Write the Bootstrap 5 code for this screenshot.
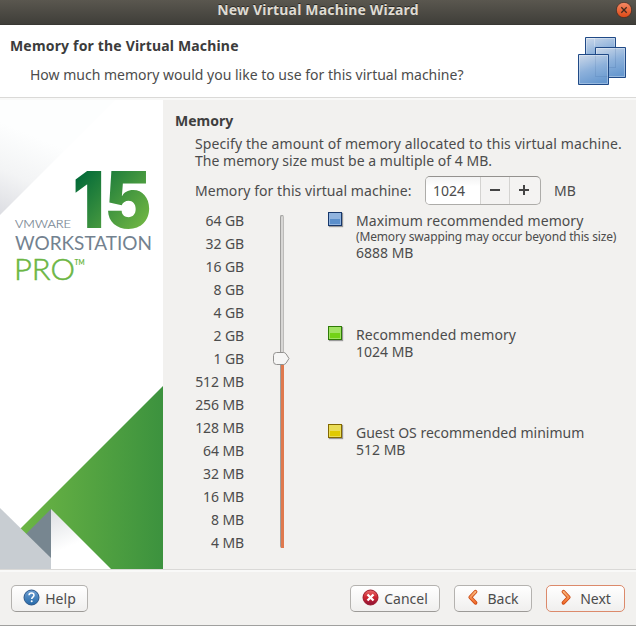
<!DOCTYPE html>
<html lang="en">
<head>
<meta charset="utf-8">
<meta name="viewport" content="width=device-width, initial-scale=1">
<title>New Virtual Machine Wizard</title>
<link href="https://cdn.jsdelivr.net/npm/bootstrap@5.3.0/dist/css/bootstrap.min.css" rel="stylesheet">
<style>
body{width:636px;height:626px;overflow:hidden;background:#f2f1ef;color:#4c4c4c;font:14px/17px "Noto Sans","Open Sans",sans-serif;margin:0}
.wizard{height:626px;border-bottom:1px solid #a0a09e}
.titlebar{height:25px;background:linear-gradient(#5a574f,#3f3e39 96%,#33322e);color:#dfdbd2;padding-bottom:6px;text-shadow:0 -1px #2a2925}
.titlebar .caption{letter-spacing:.17px}
.closer{right:4px;top:2px;width:16px;height:16px}
.intro{height:73px;background:#fff;border-bottom:1px solid #dad9d7;padding:12px 9px 0 10px}
.intro h1{font-size:14px;line-height:18px;letter-spacing:.17px;color:#3c3c3c}
.question{padding:11px 0 0 20px}
.main{height:471px;border-top:2px solid #f8f8f7}
.art{width:163px;height:469px;background:#fff}
.settings{padding:12px 0 0 12px;width:473px}
.settings h2{font-size:14px;line-height:18px;color:#3f3f3f}
.inset{padding-left:20px}
.blurb{padding-top:5px;letter-spacing:.1px;white-space:nowrap}
.blurb .second{letter-spacing:.02px}
.amount{padding-top:7px;height:36px;margin-bottom:4px}
.amount-label{width:230px;letter-spacing:.06px;white-space:nowrap}
.unit{margin-left:13px}
.spin{width:116px;height:29px;border:1px solid #adaca9;border-top-color:#94928f;border-radius:5px;background:#f4f3f2;overflow:hidden}
.spin .value{width:54px;background:linear-gradient(#f3f3f3,#fff 35%);padding-left:7px}
.spin button{width:29px;border:0;border-left:1px solid #d4d3d1;background:transparent;padding:0 0 2px;line-height:0}
.spin button + button{width:31px;padding-right:2px}
.ticks{width:49px;line-height:23px;letter-spacing:-.1px}
.track{width:4px;height:333px;margin:6px 44px 0 36px;border-radius:2px;border:1px solid #a09f9d;border-bottom:0;border-right-color:#bcbbb9;background:#d7d6d4}
.filled{height:190px;bottom:0;left:0;width:3px;background:#df794e}
.thumb{left:-8px;top:136px}
.key{padding-top:3px;width:300px}
.key-item{height:49px}
.key-item + .key-item{margin-top:65px}
.key-item + .key-item + .key-item{margin-top:49px}
.key-item .name{letter-spacing:.07px}
.key-item:last-child .name{letter-spacing:0}
.key-item small{font-size:12px;line-height:15px;letter-spacing:-.15px}
.swatch{width:14px;height:14px;margin-right:14px;border:1px solid var(--edge);background:linear-gradient(var(--hi) 50%,var(--lo) 50%);box-shadow:inset 0 0 0 1px var(--hi),1px 1px 1px #999}
.sw-blue{--edge:#17376b;--hi:#91b4df;--lo:#5b8fcb}
.sw-green{--edge:#2f7b07;--hi:#a0e362;--lo:#73d216}
.sw-gold{--edge:#836800;--hi:#eadd56;--lo:#e0ca00}
.actions{height:56px;border-top:1px solid #dad9d7;padding:15px 11px 0;box-shadow:inset 0 2px #f9f9f8}
.wbtn{height:27px;border:1px solid #b4b2af;border-bottom-color:#9c9a97;border-radius:5px;background:linear-gradient(#fff,#f0efee);color:#4c4c4c;font-size:14px;line-height:17px;padding:0 0 1px;display:flex;align-items:center;justify-content:center}
.wbtn + .wbtn + .wbtn{margin-left:14px}
.w77{width:77px}.w90{width:90px}.w78{width:78px}.w79{width:79px}
.wbtn.primary{border-color:#dc8a6b}
</style>
</head>
<body>
<div class="wizard d-flex flex-column">
  <header class="titlebar position-relative d-flex align-items-center justify-content-center fw-bold">
    <span class="caption">New Virtual Machine Wizard</span>
    <svg class="closer position-absolute" viewBox="0 0 16 16"><defs><linearGradient id="cl" x2="0" y2="1"><stop stop-color="#f58a66"/><stop offset="1" stop-color="#dd4814"/></linearGradient></defs><circle cx="8" cy="8" r="7.7" fill="url(#cl)" stroke="#3b2f28" stroke-width=".8"/><path d="M5.3 5.3l5.4 5.4M10.7 5.3l-5.4 5.4" stroke="#43291d" stroke-width="1.3"/></svg>
  </header>
  <section class="intro d-flex justify-content-between">
    <div>
      <h1 class="fw-bold m-0">Memory for the Virtual Machine</h1>
      <p class="question m-0">How much memory would you like to use for this virtual machine?</p>
    </div>
    <svg width="49" height="49" viewBox="0 0 49 49"><defs><linearGradient id="pane" x1=".2" y1="0" x2=".55" y2="1"><stop stop-color="#c8d6e8"/><stop offset=".5" stop-color="#8db1db"/><stop offset="1" stop-color="#6798cf"/></linearGradient></defs>
      <g stroke="#204a87"><g fill="url(#pane)"><path d="M7.500.500h30v30h-30z"/><path d="M17.500 10.500h30v30h-30z"/></g><path d="M17.500 30.500h20v-20" fill="none" stroke-opacity=".15"/><path d="M.500 17.500h30v30h-30z" fill="url(#pane)"/><path d="M17.500 17.500v22h13" fill="none" stroke-opacity=".12"/></g>
      <g fill="none" stroke="#fff" stroke-opacity=".3"><path d="M16.500 9.500V1.500h-8v15M9 1.500h27.500v8M18.500 17v-5.500h28v28H31"/><path d="M1.500 18.500h28v28h-28z"/></g></svg>
  </section>
  <main class="main d-flex">
    <svg class="art flex-shrink-0" viewBox="0 100 163 469">
      <defs>
        <linearGradient id="green" x1="0" x2="1"><stop offset="0" stop-color="#6cb544"/><stop offset="1" stop-color="#3c923e"/></linearGradient>
        <linearGradient id="num" gradientUnits="userSpaceOnUse" x1="78" y1="172" x2="146" y2="230"><stop stop-color="#006838"/><stop offset="1" stop-color="#75b944"/></linearGradient>
        <linearGradient id="shade" gradientUnits="userSpaceOnUse" x1="0" y1="216" x2="34" y2="136"><stop stop-color="#dcdde2"/><stop offset=".5" stop-color="#f3f4f5"/><stop offset="1" stop-color="#fdfefe"/></linearGradient>
        <linearGradient id="shade2" gradientUnits="userSpaceOnUse" x1="51" y1="512" x2="66" y2="548"><stop stop-color="#dfe1e5"/><stop offset="1" stop-color="#fff"/></linearGradient>
      </defs>
      <path d="M0 100V215L115 100z" fill="url(#shade)"/>
      <path d="M163 386L20 529L60 569H163z" fill="url(#green)"/>
      <path d="M51 509L26 534L51 559z" fill="#778690"/>
      <path d="M51 509L111 569H51z" fill="url(#shade2)"/>
      <path d="M0 508L51 558V569H0z" fill="#c8cdd2"/>
      <g font-family="Lato,sans-serif">
        <text x="72.500" y="228" font-family="Inter,sans-serif" font-weight="900" font-size="79" textLength="79" lengthAdjust="spacingAndGlyphs" fill="url(#num)">15</text>
        <text x="15" y="228" font-size="12.500" font-weight="300" textLength="56" lengthAdjust="spacingAndGlyphs" fill="#738290" stroke="#738290" stroke-width=".2">VMWARE</text>
        <text x="15" y="250" font-size="19" textLength="137" lengthAdjust="spacingAndGlyphs" fill="#738290">WORKSTATION</text>
        <text x="14" y="280" font-size="29" font-weight="300" textLength="61" lengthAdjust="spacingAndGlyphs" fill="#6cb644" stroke="#6cb644" stroke-width=".5">PRO</text>
        <text x="74.500" y="265" font-size="7" font-weight="700" textLength="10" lengthAdjust="spacingAndGlyphs" fill="#6cb644">TM</text>
      </g>
    </svg>
    <section class="settings">
      <h2 class="fw-bold m-0">Memory</h2>
      <div class="inset">
        <p class="blurb m-0">Specify the amount of memory allocated to this virtual machine.<br><span class="second">The memory size must be a multiple of 4 MB.</span></p>
        <div class="amount d-flex align-items-center">
          <span class="amount-label">Memory for this virtual machine:</span>
          <div class="spin d-flex align-items-stretch">
            <span class="value d-flex align-items-center">1024</span>
            <button type="button" aria-label="Decrease"><svg width="12" height="12"><path d="M1 5h10v2H1z" fill="#444"/></svg></button>
            <button type="button" aria-label="Increase"><svg width="12" height="12"><path d="M1 5h10v2H1zM5 1h2v10H5z" fill="#444"/></svg></button>
          </div>
          <span class="unit">MB</span>
        </div>
        <div class="d-flex align-items-start">
          <div class="ticks text-end">
            <div>64 GB</div><div>32 GB</div><div>16 GB</div><div>8 GB</div><div>4 GB</div><div>2 GB</div><div>1 GB</div><div>512 MB</div><div>256 MB</div><div>128 MB</div><div>64 MB</div><div>32 MB</div><div>16 MB</div><div>8 MB</div><div>4 MB</div>
          </div>
          <div class="track position-relative flex-shrink-0">
            <div class="filled position-absolute"></div>
            <svg class="thumb position-absolute" width="17" height="13" viewBox="0 0 17 13"><path d="M3.500.500H10.500Q12 .500 13 1.800L16 6.500 13 11.200Q12 12.500 10.500 12.500H3.500Q.500 12.500.500 9.500V3.500Q.500.500 3.500.500z" fill="#f6f6f5" stroke="#92918f"/></svg>
          </div>
          <div class="key">
            <div class="key-item d-flex"><span class="swatch sw-blue"></span><div><div class="name">Maximum recommended memory</div><small class="d-block">(Memory swapping may occur beyond this size)</small>6888 MB</div></div>
            <div class="key-item d-flex"><span class="swatch sw-green"></span><div><div class="name">Recommended memory</div>1024 MB</div></div>
            <div class="key-item d-flex"><span class="swatch sw-gold"></span><div><div class="name">Guest OS recommended minimum</div>512 MB</div></div>
          </div>
        </div>
      </div>
    </section>
  </main>
  <footer class="actions d-flex align-items-start">
    <button class="wbtn w77" type="button"><svg class="me-1" width="18" height="18" viewBox="0 0 18 18"><defs><linearGradient id="hb" x2="0" y2="1"><stop stop-color="#6d9fd2"/><stop offset="1" stop-color="#2569a9"/></linearGradient></defs><circle cx="8.500" cy="8.500" r="7.500" fill="url(#hb)" stroke="#2c5688"/><path d="M6 6.300Q6.200 4.100 8.500 4.100T11 6.200C11 8.100 8.700 8 8.700 10" fill="none" stroke="#fff" stroke-width="1.500"/><circle cx="8.700" cy="12.300" r="1" fill="#fff"/></svg>Help</button>
    <button class="wbtn w90 ms-auto" type="button"><svg class="me-1" width="18" height="18" viewBox="0 0 18 18"><defs><linearGradient id="cr" x2="0" y2="1"><stop stop-color="#e86a6a"/><stop offset=".5" stop-color="#cc2530"/><stop offset="1" stop-color="#8d1238"/></linearGradient></defs><circle cx="8.500" cy="8.500" r="7.500" fill="url(#cr)" stroke="#9c1a2c"/><path d="M5.500 5.500l6 6M11.500 5.500l-6 6" stroke="#fff" stroke-width="2.300"/></svg>Cancel</button>
    <button class="wbtn w78" type="button"><svg class="me-2" width="12" height="18" viewBox="0 0 12 18"><defs><linearGradient id="or" gradientUnits="userSpaceOnUse" x1="0" y1="1" x2="0" y2="16"><stop stop-color="#fcc185"/><stop offset="1" stop-color="#f0601f"/></linearGradient></defs><g fill="none" stroke-linecap="round" stroke-linejoin="round"><path d="M8.500 2.800L3.300 8.300L8.500 13.800" stroke="#cb4a14" stroke-width="3.800"/><path d="M8.500 2.800L3.300 8.300L8.500 13.800" stroke="url(#or)" stroke-width="2"/></g></svg>Back</button>
    <button class="wbtn primary w79" type="button"><svg class="me-2" width="12" height="18" viewBox="0 0 12 18"><g fill="none" stroke-linecap="round" stroke-linejoin="round"><path d="M3.500 2.800L8.700 8.300L3.500 13.800" stroke="#cb4a14" stroke-width="3.800"/><path d="M3.500 2.800L8.700 8.300L3.500 13.800" stroke="url(#or)" stroke-width="2"/></g></svg>Next</button>
  </footer>
</div>
<script src="https://cdn.jsdelivr.net/npm/bootstrap@5.3.0/dist/js/bootstrap.bundle.min.js"></script>
</body>
</html>
